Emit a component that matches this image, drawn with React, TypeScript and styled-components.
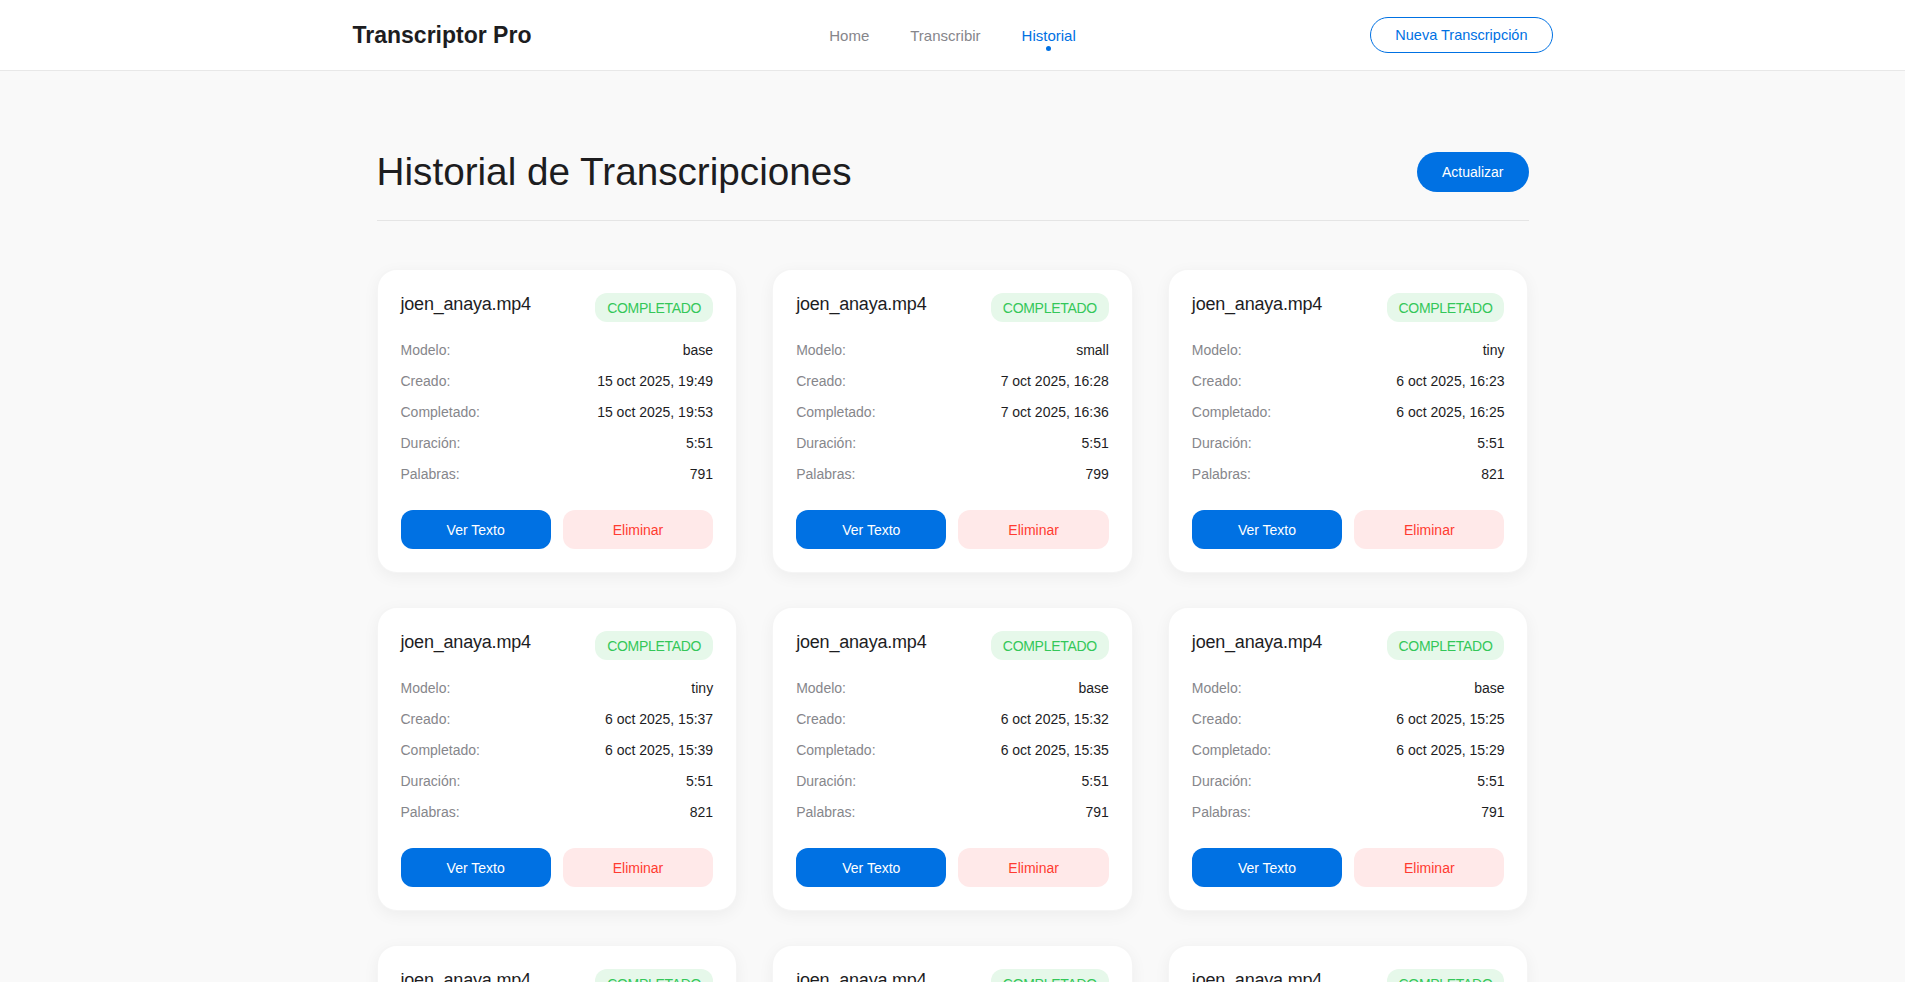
import React from "react";
import styled, { createGlobalStyle } from "styled-components";

const GlobalStyle = createGlobalStyle`
  * { box-sizing: border-box; }
  html, body { margin: 0; padding: 0; }
  body {
    background: #f9f9f9;
    font-family: "Liberation Sans", Arial, sans-serif;
    color: #1d1d1f;
  }
  button { font-family: inherit; cursor: pointer; }
`;

const Header = styled.header`
  background: #ffffff;
  border-bottom: 1px solid #e8e8e8;
`;

const HeaderInner = styled.div`
  max-width: 1200px;
  height: 70px;
  margin: 0 auto;
  display: grid;
  grid-template-columns: 1fr auto 1fr;
  align-items: center;
`;

const Logo = styled.div`
  font-size: 23px;
  font-weight: 700;
  color: #1d1d1f;
`;

const Nav = styled.nav`
  display: flex;
  gap: 41px;
  align-items: center;
`;

const NavLink = styled.a<{ $active?: boolean }>`
  position: relative;
  font-size: 15px;
  line-height: 17px;
  text-decoration: none;
  color: ${(p) => (p.$active ? "#0071e3" : "#86868b")};
  &::after {
    content: "";
    display: ${(p) => (p.$active ? "block" : "none")};
    position: absolute;
    left: 50%;
    top: calc(100% + 2px);
    width: 5px;
    height: 5px;
    margin-left: -2.5px;
    border-radius: 50%;
    background: #0071e3;
  }
`;

const HeaderActions = styled.div`
  justify-self: end;
`;

const OutlineButton = styled.button`
  height: 36px;
  padding: 0 24px;
  border: 1px solid #0071e3;
  border-radius: 999px;
  background: #ffffff;
  color: #0071e3;
  font-size: 14.5px;
`;

const Main = styled.main`
  max-width: 1200px;
  margin: 0 auto;
  padding: 77px 24px 60px;
`;

const TitleRow = styled.div`
  display: flex;
  justify-content: space-between;
  align-items: center;
  padding-bottom: 24px;
  border-bottom: 1px solid #e5e5e5;
  margin-bottom: 48px;
`;

const Title = styled.h1`
  margin: 0;
  font-size: 38.7px;
  line-height: 48px;
  font-weight: 400;
  color: #1d1d1f;
`;

const PrimaryButton = styled.button`
  height: 40px;
  padding: 0 25px;
  border: none;
  border-radius: 999px;
  background: #0071e3;
  color: #ffffff;
  font-size: 14px;
`;

const Grid = styled.div`
  display: grid;
  grid-template-columns: repeat(3, 1fr);
  column-gap: 35px;
  row-gap: 34px;
`;

const Card = styled.div`
  background: #ffffff;
  border: 1px solid rgba(0, 0, 0, 0.04);
  border-radius: 20px;
  padding: 23px 23px;
  box-shadow: 0 4px 16px rgba(0, 0, 0, 0.05);
  display: flex;
  flex-direction: column;
`;

const CardHeader = styled.div`
  display: flex;
  justify-content: space-between;
  align-items: flex-start;
  margin-bottom: 20px;
`;

const FileName = styled.div`
  font-size: 18px;
  letter-spacing: -0.2px;
  color: #1d1d1f;
  padding-top: 1px;
`;

const Badge = styled.span`
  display: inline-flex;
  align-items: center;
  height: 29px;
  padding: 0 12px;
  border-radius: 12px;
  background: #e6f8ea;
  color: #34c759;
  font-size: 14px;
  letter-spacing: -0.3px;
`;

const InfoList = styled.div`
  display: flex;
  flex-direction: column;
  gap: 15px;
`;

const InfoRow = styled.div`
  display: flex;
  justify-content: space-between;
  font-size: 14px;
  line-height: 16px;
`;

const Label = styled.span`
  color: #86868b;
`;

const Value = styled.span`
  color: #1d1d1f;
`;

const Actions = styled.div`
  display: grid;
  grid-template-columns: 1fr 1fr;
  gap: 12px;
  margin-top: 28px;
`;

const CardButton = styled.button<{ $variant: "primary" | "danger" }>`
  height: 39px;
  border: none;
  border-radius: 12px;
  font-size: 14px;
  background: ${(p) => (p.$variant === "primary" ? "#0071e3" : "#ffe9e9")};
  color: ${(p) => (p.$variant === "primary" ? "#ffffff" : "#ff3b30")};
`;

type Item = {
  modelo: string;
  creado: string;
  completado: string;
  duracion: string;
  palabras: string;
};

const items: Item[] = [
  { modelo: "base", creado: "15 oct 2025, 19:49", completado: "15 oct 2025, 19:53", duracion: "5:51", palabras: "791" },
  { modelo: "small", creado: "7 oct 2025, 16:28", completado: "7 oct 2025, 16:36", duracion: "5:51", palabras: "799" },
  { modelo: "tiny", creado: "6 oct 2025, 16:23", completado: "6 oct 2025, 16:25", duracion: "5:51", palabras: "821" },
  { modelo: "tiny", creado: "6 oct 2025, 15:37", completado: "6 oct 2025, 15:39", duracion: "5:51", palabras: "821" },
  { modelo: "base", creado: "6 oct 2025, 15:32", completado: "6 oct 2025, 15:35", duracion: "5:51", palabras: "791" },
  { modelo: "base", creado: "6 oct 2025, 15:25", completado: "6 oct 2025, 15:29", duracion: "5:51", palabras: "791" },
  { modelo: "tiny", creado: "6 oct 2025, 15:20", completado: "6 oct 2025, 15:22", duracion: "5:51", palabras: "821" },
  { modelo: "base", creado: "6 oct 2025, 15:12", completado: "6 oct 2025, 15:16", duracion: "5:51", palabras: "791" },
  { modelo: "tiny", creado: "6 oct 2025, 15:05", completado: "6 oct 2025, 15:07", duracion: "5:51", palabras: "821" },
];

export default function App() {
  return (
    <>
      <GlobalStyle />
      <Header>
        <HeaderInner>
          <Logo>Transcriptor Pro</Logo>
          <Nav>
            <NavLink href="#">Home</NavLink>
            <NavLink href="#">Transcribir</NavLink>
            <NavLink href="#" $active>
              Historial
            </NavLink>
          </Nav>
          <HeaderActions>
            <OutlineButton>Nueva Transcripción</OutlineButton>
          </HeaderActions>
        </HeaderInner>
      </Header>
      <Main>
        <TitleRow>
          <Title>Historial de Transcripciones</Title>
          <PrimaryButton>Actualizar</PrimaryButton>
        </TitleRow>
        <Grid>
          {items.map((it, i) => (
            <Card key={i}>
              <CardHeader>
                <FileName>joen_anaya.mp4</FileName>
                <Badge>COMPLETADO</Badge>
              </CardHeader>
              <InfoList>
                <InfoRow>
                  <Label>Modelo:</Label>
                  <Value>{it.modelo}</Value>
                </InfoRow>
                <InfoRow>
                  <Label>Creado:</Label>
                  <Value>{it.creado}</Value>
                </InfoRow>
                <InfoRow>
                  <Label>Completado:</Label>
                  <Value>{it.completado}</Value>
                </InfoRow>
                <InfoRow>
                  <Label>Duración:</Label>
                  <Value>{it.duracion}</Value>
                </InfoRow>
                <InfoRow>
                  <Label>Palabras:</Label>
                  <Value>{it.palabras}</Value>
                </InfoRow>
              </InfoList>
              <Actions>
                <CardButton $variant="primary">Ver Texto</CardButton>
                <CardButton $variant="danger">Eliminar</CardButton>
              </Actions>
            </Card>
          ))}
        </Grid>
      </Main>
    </>
  );
}
